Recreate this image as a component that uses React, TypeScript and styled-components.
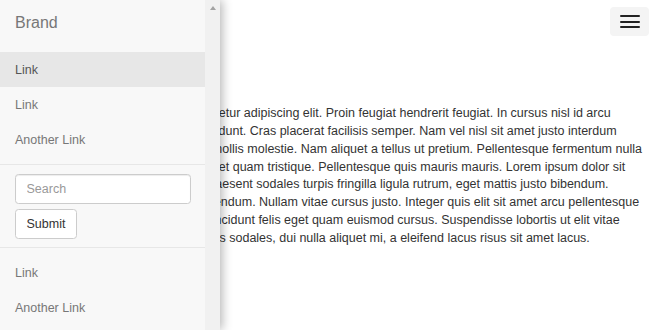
import React from 'react';
import styled, { createGlobalStyle } from 'styled-components';

const GlobalStyle = createGlobalStyle`
  body {
    margin: 0;
    background: #fff;
    font-family: "Liberation Sans", Arial, Helvetica, sans-serif;
    font-size: 12.5px;
    color: #333;
  }
`;

const Navmenu = styled.nav`
  position: fixed;
  top: 0;
  left: 0;
  bottom: 0;
  z-index: 10;
  display: flex;
  width: 220px;
  box-shadow: 2px 0 10px rgba(0, 0, 0, 0.3);
`;

const MenuPanel = styled.div`
  display: flex;
  flex-direction: column;
  width: 205px;
  background: #f8f8f8;
  overflow: hidden;
`;

const ScrollTrack = styled.div`
  display: flex;
  justify-content: center;
  width: 15px;
  padding-top: 6px;
  box-sizing: border-box;
  background: #f1f1f1;
`;

const ScrollArrow = styled.span`
  width: 0;
  height: 0;
  border-left: 3.5px solid transparent;
  border-right: 3.5px solid transparent;
  border-bottom: 4px solid #a3a3a3;
`;

const Brand = styled.a`
  display: block;
  height: 52px;
  box-sizing: border-box;
  padding: 14px 15px 0;
  font-size: 16px;
  line-height: 18px;
  color: #777;
`;

const NavList = styled.ul`
  list-style: none;
  margin: 0;
  padding: 0;
`;

const NavLink = styled.a<{ $active?: boolean }>`
  display: flex;
  align-items: center;
  height: 35px;
  padding: 0 15px;
  color: ${(p) => (p.$active ? '#555' : '#777')};
  background: ${(p) => (p.$active ? '#e7e7e7' : 'transparent')};
`;

const SearchForm = styled.form`
  display: flex;
  flex-direction: column;
  align-items: flex-start;
  gap: 5px;
  margin: 7px 0;
  padding: 9px 15px 8px;
  border-top: 1px solid #e7e7e7;
  border-bottom: 1px solid #e7e7e7;
`;

const SearchInput = styled.input`
  width: 176px;
  height: 30px;
  box-sizing: border-box;
  padding: 0 10.5px;
  border: 1px solid #ccc;
  border-radius: 3.5px;
  box-shadow: inset 0 1px 1px rgba(0, 0, 0, 0.075);
  font: inherit;
  color: #555;
  background: #fff;
  outline: none;
  &::placeholder {
    color: #999;
  }
`;

const SubmitButton = styled.button`
  height: 30px;
  padding: 0 10.5px;
  border: 1px solid #ccc;
  border-radius: 3.5px;
  background: #fff;
  font: inherit;
  color: #333;
`;

const Header = styled.header`
  display: flex;
  justify-content: flex-end;
  padding: 7px 11px 0;
`;

const Toggle = styled.button`
  display: flex;
  flex-direction: column;
  justify-content: center;
  gap: 3.5px;
  width: 39px;
  height: 29px;
  padding: 0 9.5px;
  border: none;
  border-radius: 4px;
  background: #f4f4f4;
`;

const IconBar = styled.span`
  display: block;
  height: 2px;
  border-radius: 1px;
  background: #222;
`;

const Content = styled.main`
  padding: 69px 15px 0 18px;
`;

const Paragraph = styled.p`
  margin: 0;
  line-height: 17.85px;
`;

const text =
  'Lorem ipsum dolor sit amet, consectetur adipiscing elit. Proin feugiat hendrerit feugiat. In cursus nisl id arcu ' +
  'Vivamus mattis lectus ut dictum tincidunt. Cras placerat facilisis semper. Nam vel nisl sit amet justo interdum ' +
  'Aliquam erat volutpat. Donec justo mollis molestie. Nam aliquet a tellus ut pretium. Pellentesque fermentum nulla ' +
  'Curabitur varius nunc mauris nec eget quam tristique. Pellentesque quis mauris mauris. Lorem ipsum dolor sit ' +
  'amet, consectetur adipiscing elit. Praesent sodales turpis fringilla ligula rutrum, eget mattis justo bibendum. ' +
  'Vestibulum ante ipsum primis in bibendum. Nullam vitae cursus justo. Integer quis elit sit amet arcu pellentesque ' +
  'Maecenas tempus nibh ac mauris tincidunt felis eget quam euismod cursus. Suspendisse lobortis ut elit vitae ' +
  'Etiam rhoncus ante ut vitae nec tellus sodales, dui nulla aliquet mi, a eleifend lacus risus sit amet lacus.';

const App = () => {
  return (
    <>
      <GlobalStyle />
      <Navmenu>
        <MenuPanel>
          <Brand>Brand</Brand>
          <NavList>
            <li>
              <NavLink $active>Link</NavLink>
            </li>
            <li>
              <NavLink>Link</NavLink>
            </li>
            <li>
              <NavLink>Another Link</NavLink>
            </li>
          </NavList>
          <SearchForm onSubmit={(e) => e.preventDefault()}>
            <SearchInput placeholder="Search" />
            <SubmitButton type="submit">Submit</SubmitButton>
          </SearchForm>
          <NavList>
            <li>
              <NavLink>Link</NavLink>
            </li>
            <li>
              <NavLink>Another Link</NavLink>
            </li>
          </NavList>
        </MenuPanel>
        <ScrollTrack>
          <ScrollArrow />
        </ScrollTrack>
      </Navmenu>
      <Header>
        <Toggle aria-label="Toggle navigation">
          <IconBar />
          <IconBar />
          <IconBar />
        </Toggle>
      </Header>
      <Content>
        <Paragraph>{text}</Paragraph>
      </Content>
    </>
  );
};

export default App;
